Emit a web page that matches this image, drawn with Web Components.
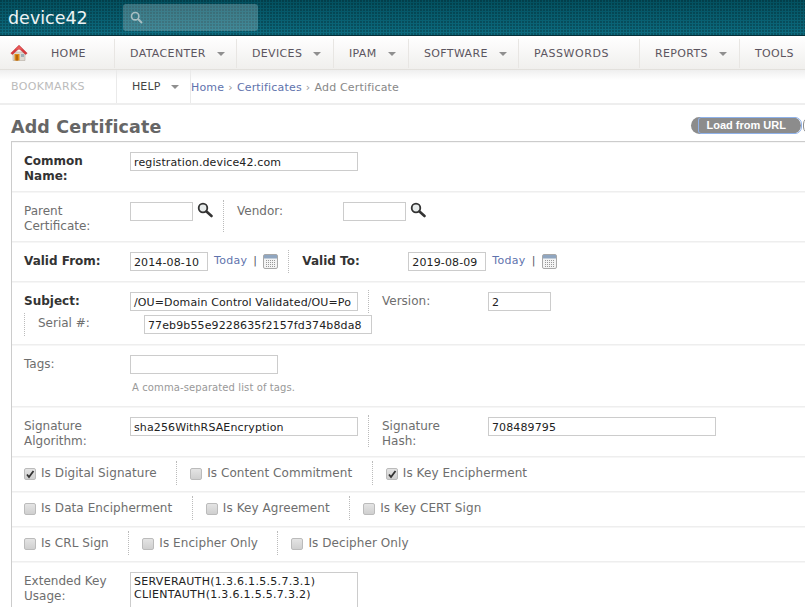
<!DOCTYPE html>
<html>
  <head>
    <meta charset="utf-8">
    <style>
      html, body { margin: 0; padding: 0; background: #fff; overflow: hidden; }
      body { font: 12px "DejaVu Sans", Verdana, sans-serif; color: #666; width: 805px; height: 607px; }
    </style>
  </head>
  <body>
    <template id="d42-topbar">
      <style>
        :host {
          display: flex; align-items: center; height: 35px; box-sizing: content-box;
          border-bottom: 1px solid #04303a;
          background:
            radial-gradient(circle at 1px 1px, rgba(0,0,0,.22) 0.8px, transparent 1px) 0 0 / 3px 3px,
            linear-gradient(#03505f, #0d6c80);
        }
        .logo { font-size: 17.500px; color: #eef3f4; margin-left: 8px; width: 115px; }
        .search {
          width: 135px; height: 27px; border-radius: 3px; background: rgba(255,255,255,.22);
          display: flex; align-items: center; padding-left: 7px; box-sizing: border-box; margin-top: -1px;
        }
      </style>
      <span class="logo">device42</span>
      <div class="search">
        <svg width="13" height="13" viewBox="0 0 13 13" fill="none" stroke="#a9bfc3">
          <circle cx="5.2" cy="5.2" r="3.7" stroke-width="1.6"/>
          <path d="M8 8l4 4" stroke-width="2"/>
        </svg>
      </div>
    </template>

    <template id="d42-nav">
      <style>
        :host {
          display: flex; height: 34px; box-sizing: border-box; border-bottom: 1px solid #e2e0dc;
          background: linear-gradient(#fff, #f0efed); padding-left: 0;
        }
        .home { width: 114px; display: flex; align-items: center; box-sizing: border-box; padding-left: 10px; }
        .home span { margin-left: 23px; padding-top: 2px; }
        span { font-size: 11px; color: #5c5560; letter-spacing: .35px; }
      </style>
      <div class="home">
        <svg width="18" height="18" viewBox="0 0 18 18">
          <path d="M3 8h12v8.500H3z" fill="#ddd9d2" stroke="#b5ada3" stroke-width=".6"/>
          <path d="M.8 9.200 9 1.200l8.200 8-1.600 1.300L9 4.600 2.400 10.500z" fill="#d8383c" stroke="#b92a2e" stroke-width=".5"/>
          <path d="M9 1.800 5 5.600h8z" fill="#e85a5a"/>
          <rect x="4.500" y="10" width="5" height="6.500" fill="#e08a12"/>
          <rect x="5.800" y="11" width="2.200" height="5.500" fill="#b5650c"/>
          <rect x="11" y="10" width="3" height="3" fill="#9fb0b8"/>
        </svg>
        <span>HOME</span>
      </div>
      <slot></slot>
    </template>

    <template id="d42-nav-item">
      <style>
        :host {
          display: flex; align-items: center; box-sizing: border-box; padding-left: 15px;
          border-left: 1px solid #e8e6e3; margin-top: 3px; margin-bottom: 1px; font-size: 11px;
          color: #5c5560; letter-spacing: .35px; white-space: nowrap;
        }
        .caret {
          display: none; width: 0; height: 0; border: 4px solid transparent; border-top: 4px solid #8f8f8f;
          border-bottom: 0; margin-left: 11px;
        }
        :host([menu]) .caret { display: block; }
      </style>
      <slot></slot><i class="caret"></i>
    </template>

    <template id="d42-subbar">
      <style>
        :host {
          display: flex; align-items: stretch; height: 35px; box-sizing: border-box; border-bottom: 2px solid #eee;
          background: linear-gradient(#efefef, #fff 10px);
        }
        .book { width: 116px; padding-left: 11px; box-sizing: border-box; color: #bbb; font-size: 11px; letter-spacing: .35px; line-height: 33px; padding-top: 0; }
        .help {
          width: 75px; box-sizing: border-box; padding-left: 15px; border-left: 1px solid #eaeaea; border-right: 1px solid #eaeaea;
          display: flex; align-items: center; color: #444; font-size: 11px; letter-spacing: .1px; margin-bottom: 0;
        }
        .help i { width: 0; height: 0; border: 4px solid transparent; border-top: 4px solid #8f8f8f; border-bottom: 0; margin-left: 11px; }
        .crumbs { line-height: 35px; font-size: 11px; letter-spacing: .17px; color: #888; white-space: nowrap; }
        .crumbs b { font-weight: normal; color: #5f73ad; }
        .crumbs u { text-decoration: none; color: #999; margin: 0 .4px; }
      </style>
      <div class="book">BOOKMARKS</div>
      <div class="help">HELP<i></i></div>
      <div class="crumbs"><b>Home</b> <u>›</u> <b>Certificates</b> <u>›</u> Add Certificate</div>
    </template>

    <template id="d42-title">
      <style>
        :host { display: flex; justify-content: space-between; align-items: center; height: 36px; box-sizing: border-box; padding: 7px 0 0 11px; position: relative; }
        h1 { margin: 0; font-size: 17.500px; letter-spacing: .14px; font-weight: bold; color: #666; }
        .btn {
          margin-right: 4px; margin-top: -2px; width: 110px; height: 17px; border-radius: 9px; background: #8c8c8c; color: #fff;
          font: bold 11px/17px "Liberation Sans", Arial, sans-serif; box-sizing: border-box; padding-left: 15.500px; position: relative;
        }
        .btn::after { content: ""; position: absolute; left: 7px; right: -1px; top: 0; bottom: 0; border: 1px solid #8fb2ea; border-radius: 3px 7px 7px 3px; }
        .next { position: absolute; right: -12px; top: 12px; width: 14px; height: 17px; border-radius: 9px; border: 1px solid #8c8c8c; box-sizing: border-box; }
      </style>
      <h1><slot></slot></h1>
      <div class="btn">Load from URL</div>
      <div class="next"></div>
    </template>

    <template id="d42-form">
      <style>
        :host { display: block; margin-left: 11px; border-top: 1px solid #ccc; border-left: 1px solid #ccc; }
      </style>
      <slot></slot>
    </template>

    <template id="d42-row">
      <style>
        :host { display: flex; align-items: flex-start; align-content: flex-start; flex-wrap: wrap; box-sizing: border-box; padding-left: 12px; border-bottom: 1px solid #eee; border-top: 1px solid #f6f6f6; }
      </style>
      <slot></slot>
    </template>

    <template id="d42-label">
      <style>
        :host { display: block; flex: none; box-sizing: border-box; line-height: 15px; padding-top: 11px; color: #6e6e6e; }
        :host([strong]) { font-weight: bold; color: #333; }
      </style>
      <slot></slot>
    </template>

    <template id="d42-box">
      <style>
        :host {
          display: block; flex: none; box-sizing: border-box; height: 19px; border: 1px solid #ccc; background: #fff;
          margin-top: 9px; font-size: 11px; line-height: 18px; padding: 1px 0 0 3px; color: #222; white-space: nowrap; overflow: hidden;
          letter-spacing: .12px;
        }
        :host([lines]) { line-height: 13px; padding-top: 2px; letter-spacing: .3px; }
        :host([lines]) slot { white-space: pre; }
      </style>
      <slot></slot>
    </template>

    <template id="d42-sep">
      <style>
        :host { display: block; flex: none; width: 0; height: 32px; border-left: 1px dotted #bbb; margin-top: 7px; margin-left: 10px; margin-right: 13px; }
      </style>
    </template>

    <template id="d42-search">
      <style>
        :host { display: block; flex: none; margin: 9px 0 0 4px; width: 16px; height: 18px; }
      </style>
      <svg width="16" height="16" viewBox="0 0 16 16" fill="none">
        <circle cx="6" cy="6" r="4.300" fill="#e8ecec" stroke="#333" stroke-width="1.800"/>
        <path d="M9.500 9.500 14.500 14" stroke="#333" stroke-width="2.600" stroke-linecap="round"/>
      </svg>
    </template>

    <template id="d42-today">
      <style>
        :host { display: flex; flex: none; align-items: center; margin: 7px 0 0 6px; color: #5f73ad; font-size: 11px; letter-spacing: .3px; height: 20px; }
        i { font-style: normal; margin: 0 6px 0 6px; color: #556; }
        svg { margin-top: 2px; }
      </style>
      Today<i>|</i>
      <svg width="15" height="15" viewBox="0 0 15 15">
        <rect x=".5" y=".5" width="14" height="14" rx="1.500" fill="#f4f4f4" stroke="#a8a8a8"/>
        <rect x="1" y="1" width="13" height="3.500" fill="#90a6c0"/>
        <path d="M3 6.500h9M3 8.500h9M3 10.500h9M3 12.500h9" stroke="#999" stroke-dasharray="1 1"/>
      </svg>
    </template>

    <template id="d42-check">
      <style>
        :host { display: flex; flex: none; align-items: center; height: 20px; margin-top: 5px; color: #6e6e6e; white-space: nowrap; padding-right: 19.500px; letter-spacing: .07px; }
        .cb {
          width: 12px; height: 12px; box-sizing: border-box; border: 1px solid #bbb; border-radius: 2px; background: linear-gradient(#e4e4e4, #cfcfcf);
          margin-right: 5px; position: relative; top: 1px; display: flex; align-items: center; justify-content: center;
        }
        svg { display: none; }
        :host([checked]) svg { display: block; }
      </style>
      <span class="cb"><svg width="10" height="10" viewBox="0 0 10 10"><path d="M2 5.500 4 8 8.500 2" fill="none" stroke="#333" stroke-width="1.800"/></svg></span>
      <slot></slot>
    </template>

    <template id="d42-csep">
      <style>
        :host { display: block; flex: none; width: 0; height: 24px; border-left: 1px dotted #bbb; margin-top: 3px; margin-right: 13px; }
      </style>
    </template>

    <d42-topbar></d42-topbar>
    <d42-nav>
      <d42-nav-item menu style="width:122px">DATACENTER</d42-nav-item>
      <d42-nav-item menu style="width:97px">DEVICES</d42-nav-item>
      <d42-nav-item menu style="width:75px">IPAM</d42-nav-item>
      <d42-nav-item menu style="width:110px">SOFTWARE</d42-nav-item>
      <d42-nav-item style="width:121px;letter-spacing:.55px">PASSWORDS</d42-nav-item>
      <d42-nav-item menu style="width:100px">REPORTS</d42-nav-item>
      <d42-nav-item style="width:66px">TOOLS</d42-nav-item>
    </d42-nav>
    <d42-subbar></d42-subbar>
    <d42-title>Add Certificate</d42-title>
    <d42-form>
      <d42-row style="height:50px">
        <d42-label strong style="width:106px">Common Name:</d42-label>
        <d42-box style="width:228px">registration.device42.com</d42-box>
      </d42-row>
      <d42-row style="height:50px">
        <d42-label style="width:106px">Parent Certificate:</d42-label>
        <d42-box style="width:63px"></d42-box>
        <d42-search></d42-search>
        <d42-sep></d42-sep>
        <d42-label style="width:106px">Vendor:</d42-label>
        <d42-box style="width:63px"></d42-box>
        <d42-search></d42-search>
      </d42-row>
      <d42-row style="height:40px">
        <d42-label strong style="width:106px">Valid From:</d42-label>
        <d42-box style="width:78px">2014-08-10</d42-box>
        <d42-today></d42-today>
        <d42-sep style="height:23px"></d42-sep>
        <d42-label strong style="width:106px">Valid To:</d42-label>
        <d42-box style="width:78px">2019-08-09</d42-box>
        <d42-today></d42-today>
      </d42-row>
      <d42-row style="height:63px">
        <d42-label strong style="width:106px">Subject:</d42-label>
        <d42-box style="width:228px">/OU=Domain Control Validated/OU=Po</d42-box>
        <d42-sep style="height:23px"></d42-sep>
        <d42-label style="width:106px">Version:</d42-label>
        <d42-box style="width:63px">2</d42-box>
        <div style="display:flex;flex-basis:100%;margin-top:-3px">
          <d42-sep style="height:23px;margin:3px 13px 0 0"></d42-sep>
          <d42-label style="width:106px;padding-top:6px">Serial #:</d42-label>
          <d42-box style="width:228px;margin-top:5px">77eb9b55e9228635f2157fd374b8da8</d42-box>
        </div>
      </d42-row>
      <d42-row style="height:62px">
        <d42-label style="width:106px">Tags:</d42-label>
        <div>
          <d42-box style="width:148px"></d42-box>
          <div style="font-size:10px;color:#999;margin:8px 0 0 2px;letter-spacing:.1px">A comma-separated list of tags.</div>
        </div>
      </d42-row>
      <d42-row style="height:50px">
        <d42-label style="width:106px">Signature Algorithm:</d42-label>
        <d42-box style="width:228px">sha256WithRSAEncryption</d42-box>
        <d42-sep></d42-sep>
        <d42-label style="width:106px">Signature<br>Hash:</d42-label>
        <d42-box style="width:228px">708489795</d42-box>
      </d42-row>
      <d42-row style="height:35px">
        <d42-check checked>Is Digital Signature</d42-check>
        <d42-csep></d42-csep>
        <d42-check>Is Content Commitment</d42-check>
        <d42-csep></d42-csep>
        <d42-check checked>Is Key Encipherment</d42-check>
      </d42-row>
      <d42-row style="height:35px">
        <d42-check>Is Data Encipherment</d42-check>
        <d42-csep></d42-csep>
        <d42-check>Is Key Agreement</d42-check>
        <d42-csep></d42-csep>
        <d42-check>Is Key CERT Sign</d42-check>
      </d42-row>
      <d42-row style="height:35px">
        <d42-check>Is CRL Sign</d42-check>
        <d42-csep></d42-csep>
        <d42-check>Is Encipher Only</d42-check>
        <d42-csep></d42-csep>
        <d42-check>Is Decipher Only</d42-check>
      </d42-row>
      <d42-row style="height:45px;border-bottom:0">
        <d42-label style="width:106px">Extended Key Usage:</d42-label>
        <d42-box lines style="width:228px;height:60px">SERVERAUTH(1.3.6.1.5.5.7.3.1)
CLIENTAUTH(1.3.6.1.5.5.7.3.2)</d42-box>
      </d42-row>
    </d42-form>

    <script>
      // every element is the same thing: clone the template with its own name
      ['d42-topbar', 'd42-nav', 'd42-nav-item', 'd42-subbar', 'd42-title', 'd42-form', 'd42-row',
       'd42-label', 'd42-box', 'd42-sep', 'd42-search', 'd42-today', 'd42-check', 'd42-csep'].forEach(function (name) {
        customElements.define(name,
          class extends HTMLElement {
            constructor() {
              super();
              let template = document.getElementById(name);
              this.attachShadow({mode: 'open'}).appendChild(template.content.cloneNode(true));
            }
          }
        );
      });
    </script>
  </body>
</html>
